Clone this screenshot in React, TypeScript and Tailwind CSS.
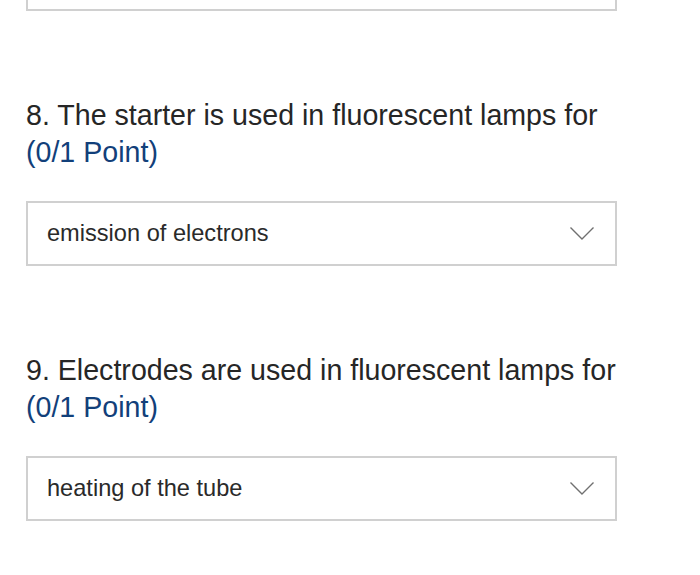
import React from "react";

function Chevron() {
  return (
    <svg width="26" height="15" viewBox="0 0 26 15" fill="none">
      <path d="M1.5 1.5 L13 13 L24.5 1.5" stroke="#707070" strokeWidth="1.4" />
    </svg>
  );
}

function Select({ value }: { value: string }) {
  return (
    <div className="flex h-[65px] w-[591px] items-center justify-between border-2 border-[#d0d0d0] pl-[19px] pr-[20px]">
      <span className="text-[23.6px] text-[#2a2a2a]">{value}</span>
      <Chevron />
    </div>
  );
}

function Question({ title, value }: { title: string; value: string }) {
  return (
    <div className="flex flex-col">
      <div className="text-[28.6px] leading-[37px] text-[#262626]">
        <div>{title}</div>
        <div className="text-[#12407a]">(0/1 Point)</div>
      </div>
      <div className="mt-[30px]">
        <Select value={value} />
      </div>
    </div>
  );
}

export default function App() {
  return (
    <div
      className="h-[575px] w-[700px] overflow-hidden bg-white pl-[26px]"
      style={{ fontFamily: '"Liberation Sans", Arial, sans-serif' }}
    >
      <div className="mt-[-54px] h-[65px] w-[591px] border-2 border-[#d0d0d0]" />
      <div className="mt-[86px] flex flex-col gap-[86px]">
        <Question title="8. The starter is used in fluorescent lamps for" value="emission of electrons" />
        <Question title="9. Electrodes are used in fluorescent lamps for" value="heating of the tube" />
      </div>
    </div>
  );
}
